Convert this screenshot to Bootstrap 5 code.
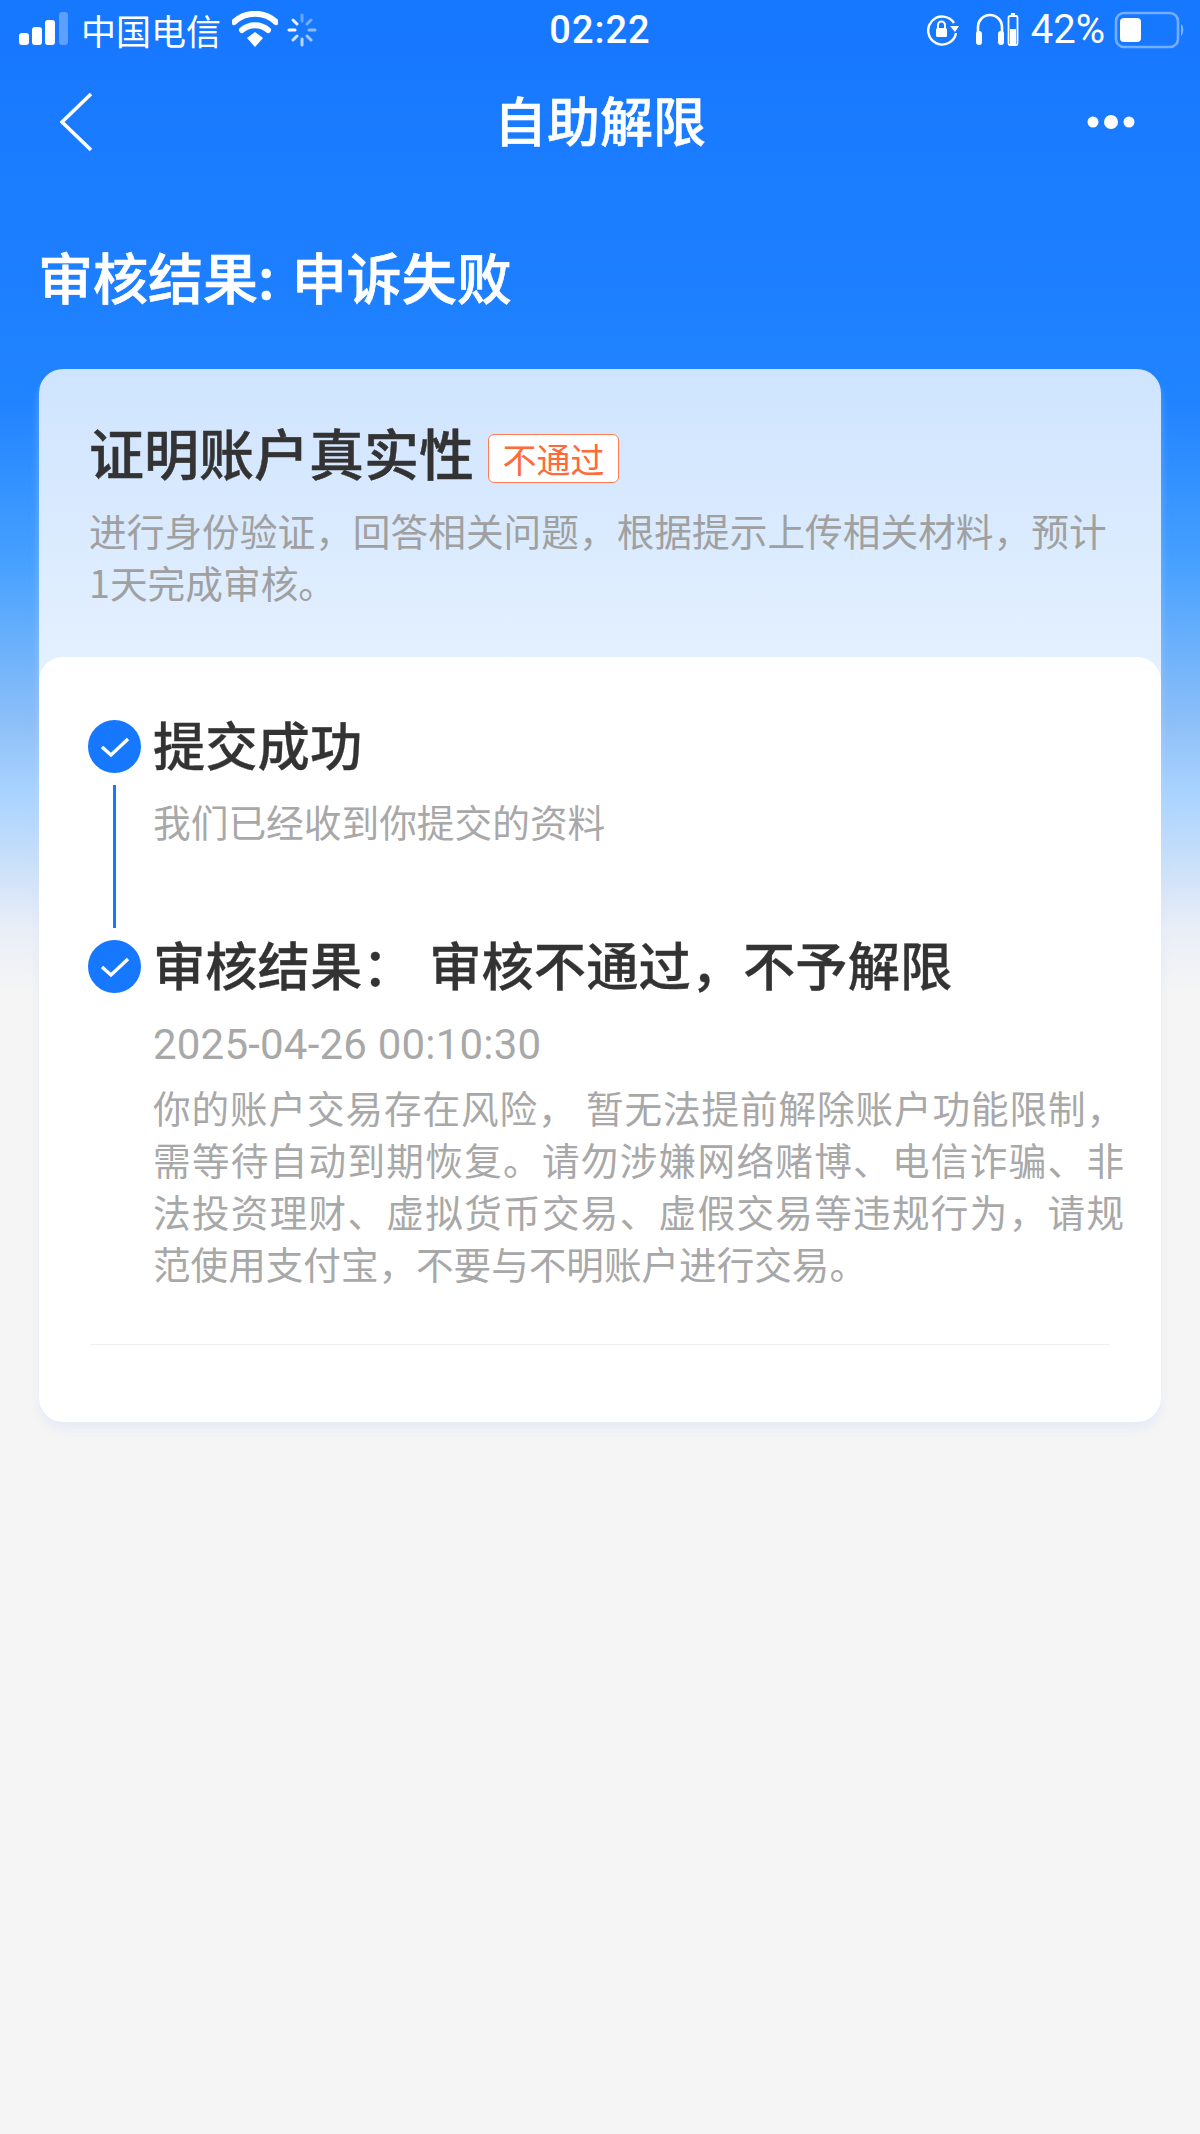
<!DOCTYPE html>
<html lang="zh-CN">
<head>
    <meta charset="UTF-8">
    <meta name="viewport" content="width=device-width, initial-scale=1.0">
    <title>自助解限</title>
    <link href="https://cdn.jsdelivr.net/npm/bootstrap@5.3.3/dist/css/bootstrap.min.css" rel="stylesheet">
    <style>
        body{
            font-family: "Noto Sans CJK SC", "Noto Sans", sans-serif;
            min-height: 2134px;
            background: linear-gradient(180deg, #1677ff 0, #2083ff 400px, #46a0ff 560px, #8fc0f8 727px, #a9d3ff 793px, #c8dffa 860px, #e9eef7 927px, #f5f5f5 993px) no-repeat #f5f5f5;
        }
        .status-bar{
            height: 60px;
            padding: 0 16px;
            color: #fff;
        }
        .bar-side{ flex: 1 1 0; }
        .carrier{ font-size: 35px; line-height: 60px; margin: 0 11px 0 12px; }
        .clock{ font-family: Roboto, sans-serif; font-size: 38px; font-weight: 500; letter-spacing: 1px; line-height: 60px; }
        .percent{ font-family: Roboto, sans-serif; font-size: 40px; line-height: 60px; margin: 0 9px 0 12px; }
        .top-nav{
            height: 124px;
            padding: 0 60px;
            color: #fff;
        }
        .nav-title{ font-size: 53px; font-weight: 500; line-height: 70px; margin-top: -6px; -webkit-text-stroke: .5px #fff; }
        .page-head{
            color: #fff;
            font-size: 55px;
            font-weight: 500;
            word-spacing: 5px;
            line-height: 70px;
            margin: 56px 0 59px 38px;
            -webkit-text-stroke: .7px #fff;
        }
        .result-card{
            margin: 0 39px;
            border-radius: 24px;
            background: linear-gradient(180deg, #cfe4fe 0, #e3f0ff 290px, #e8f2ff 100%);
            box-shadow: 0 8px 8px rgba(205, 220, 245, .35);
            overflow: hidden;
        }
        .intro-box{ padding: 47px 50px 49px 50px; }
        .intro-title{ font-size: 55px; font-weight: 500; line-height: 70px; color: #333; margin: 0; -webkit-text-stroke: .5px #333; }
        .fail-tag{
            width: 131px;
            height: 49px;
            margin: 15px 0 0 14px;
            font-size: 34px;
            line-height: 1;
            color: #ff6a3a;
            background: #fff;
            border: 1px solid #ff7d55;
            border-radius: 6px;
        }
        .intro-desc{ font-size: 37.7px; line-height: 52px; color: #a0a0a0; margin: 18px 0 0; }
        .steps-box{
            background: #fff;
            border-radius: 24px;
            padding: 59px 37px 77px 49px;
        }
        .step-mark{ width: 53px; margin-right: 12px; }
        .step-dot{ width: 53px; height: 53px; margin-top: 4px; border-radius: 50%; background: #1677ff; }
        .step-line{ width: 3px; margin-top: 12px; margin-bottom: 8px; background: #1677ff; flex: 1 1 auto; }
        .step-title{ font-size: 52.3px; font-weight: 500; word-spacing: 3px; line-height: 60px; color: #333; margin: -3px 0 0; -webkit-text-stroke: .3px #333; }
        .step-sub{ font-size: 37.7px; line-height: 52px; color: #a8a8a8; margin: 22px 0 89px; }
        .step-date{ font-family: Roboto, sans-serif; font-size: 42px; letter-spacing: .2px; line-height: 52px; color: #a8a8a8; margin: 26px 0 10px; }
        .step-text{ font-size: 37.6px; line-height: 52px; color: #a8a8a8; margin: 0; text-align: justify; }
        .step-rule{ margin: 55px 14px 0 2px; border-top: 1px solid #f0f0f0; }
    </style>
</head>
<body>
    <div class="status-bar d-flex align-items-center">
        <div class="bar-side d-flex align-items-center">
            <svg width="53" height="36" viewBox="0 0 53 36">
                <rect x="3" y="21" width="10" height="12" rx="3" fill="#fff"/>
                <rect x="16" y="15" width="10" height="18" rx="3" fill="#fff"/>
                <rect x="29" y="8" width="10" height="25" rx="3" fill="#fff"/>
                <rect x="43" y="0" width="9" height="33" rx="3" fill="#fff" opacity=".3"/>
            </svg>
            <span class="carrier">中国电信</span>
            <svg width="46" height="38" viewBox="0 0 46 38">
                <path d="M2 11a31 31 0 0 1 42 0" fill="none" stroke="#fff" stroke-width="6" stroke-linecap="round"/>
                <path d="M10 19a20 20 0 0 1 26 0" fill="none" stroke="#fff" stroke-width="6" stroke-linecap="round"/>
                <path d="M15 27l8-6 8 6-8 9z" fill="#fff"/>
            </svg>
            <svg class="ms-2" width="32" height="36" viewBox="0 0 32 36" stroke="#fff" stroke-width="3" stroke-linecap="round">
                <path d="M16 3v6" opacity=".35"/><path d="M25 8l-4 4" opacity=".4"/><path d="M29 18h-6" opacity=".5"/><path d="M25 28l-4-4" opacity=".6"/>
                <path d="M16 33v-6" opacity=".7"/><path d="M7 28l4-4" opacity=".8"/><path d="M3 18h6"/><path d="M7 8l4 4" opacity=".9"/>
            </svg>
        </div>
        <div class="clock">02:22</div>
        <div class="bar-side d-flex align-items-center justify-content-end">
            <svg width="32" height="34" viewBox="0 0 32 34">
                <path d="M27 10a14 14 0 1 0 2 10" fill="none" stroke="#fff" stroke-width="2.4"/>
                <path d="M23 13h9l-4 6z" fill="#fff"/>
                <rect x="9" y="15" width="11" height="9" rx="1.5" fill="#fff"/>
                <path d="M11 15v-3a3.5 3.5 0 0 1 7 0v3" fill="none" stroke="#fff" stroke-width="2"/>
            </svg>
            <svg class="ms-3" width="44" height="36" viewBox="0 0 44 36">
                <path d="M3 22v-7a12 12 0 0 1 24 0v7" fill="none" stroke="#fff" stroke-width="2.6"/>
                <rect x="1" y="19" width="6" height="14" rx="3" fill="#fff"/>
                <rect x="23" y="19" width="6" height="14" rx="3" fill="#fff"/>
                <rect x="33.5" y="4" width="9" height="29" rx="1.5" fill="none" stroke="#fff" stroke-width="1.8"/>
                <rect x="36" y="1" width="4" height="3" fill="#fff"/>
                <rect x="35" y="17" width="6" height="15" fill="#fff"/>
            </svg>
            <span class="percent">42%</span>
            <svg width="70" height="38" viewBox="0 0 70 38">
                <rect x="2" y="2" width="62" height="34" rx="8" fill="none" stroke="#fff" stroke-opacity=".4" stroke-width="2.6"/>
                <rect x="6" y="7" width="21" height="24" rx="4" fill="#fff"/>
                <path d="M67 13c3 2 3 10 0 12z" fill="#fff" opacity=".45"/>
            </svg>
        </div>
    </div>

    <div class="top-nav d-flex align-items-center">
        <div class="bar-side">
            <svg class="d-block" width="36" height="60" viewBox="0 0 36 60">
                <path d="M31 2L2 30l29 28" fill="none" stroke="#fff" stroke-width="3.6"/>
            </svg>
        </div>
        <div class="nav-title">自助解限</div>
        <div class="bar-side d-flex justify-content-end">
            <svg width="53" height="16" viewBox="0 0 53 16" fill="#fff">
                <circle cx="6" cy="8" r="5.5"/><circle cx="24" cy="8" r="7"/><circle cx="42" cy="8" r="5.5"/>
            </svg>
        </div>
    </div>

    <div class="page-head">审核结果: 申诉失败</div>

    <div class="result-card card border-0">
        <div class="intro-box">
            <div class="d-flex align-items-center">
                <h2 class="intro-title">证明账户真实性</h2>
                <span class="fail-tag d-flex align-items-center justify-content-center">不通过</span>
            </div>
            <p class="intro-desc">进行身份验证，回答相关问题，根据提示上传相关材料，预计1天完成审核。</p>
        </div>
        <div class="steps-box">
            <div class="d-flex">
                <div class="step-mark d-flex flex-column align-items-center">
                    <div class="step-dot d-flex align-items-center justify-content-center flex-shrink-0">
                        <svg width="30" height="22" viewBox="0 0 30 22"><path d="M2 11l9 8L28 3" fill="none" stroke="#fff" stroke-width="3.4"/></svg>
                    </div>
                    <div class="step-line"></div>
                </div>
                <div class="flex-grow-1">
                    <h3 class="step-title">提交成功</h3>
                    <p class="step-sub">我们已经收到你提交的资料</p>
                </div>
            </div>
            <div class="d-flex">
                <div class="step-mark flex-shrink-0">
                    <div class="step-dot d-flex align-items-center justify-content-center">
                        <svg width="30" height="22" viewBox="0 0 30 22"><path d="M2 11l9 8L28 3" fill="none" stroke="#fff" stroke-width="3.4"/></svg>
                    </div>
                </div>
                <div class="flex-grow-1">
                    <h3 class="step-title">审核结果： 审核不通过，不予解限</h3>
                    <div class="step-date">2025-04-26 00:10:30</div>
                    <p class="step-text">你的账户交易存在风险， 暂无法提前解除账户功能限制，需等待自动到期恢复。请勿涉嫌网络赌博、电信诈骗、非法投资理财、虚拟货币交易、虚假交易等违规行为，请规范使用支付宝，不要与不明账户进行交易。</p>
                </div>
            </div>
            <div class="step-rule"></div>
        </div>
    </div>

    <script src="https://cdn.jsdelivr.net/npm/bootstrap@5.3.3/dist/js/bootstrap.bundle.min.js"></script>
</body>
</html>
